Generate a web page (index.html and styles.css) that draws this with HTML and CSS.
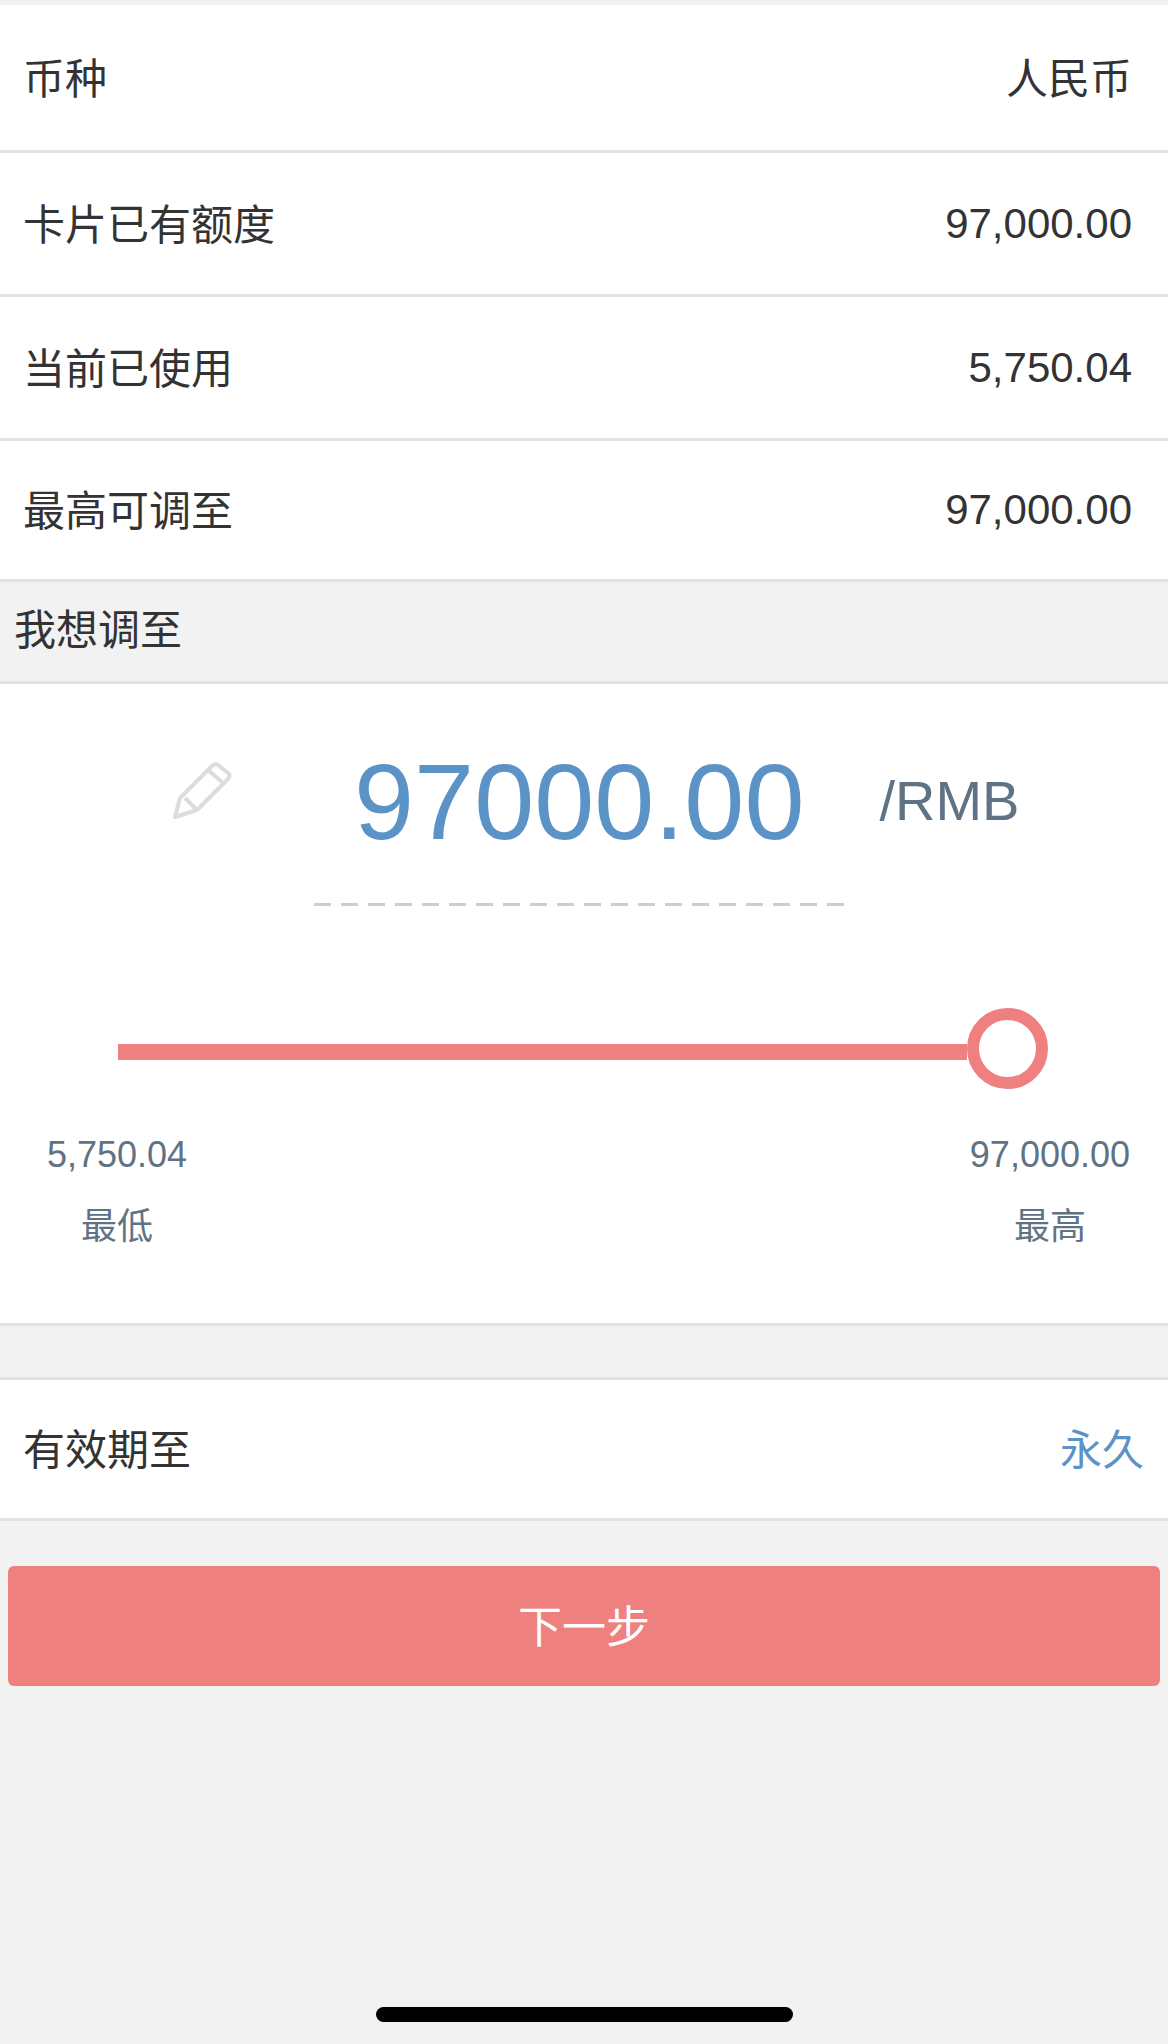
FILE: index.html
```html
<!DOCTYPE html>
<html>
  <head>
    <meta charset="utf-8">
    <link rel="stylesheet" href="styles.css">
  </head>
  <body>
    <div class="page">
      <div class="info-list">
        <div class="row row-first"><span class="cjk">币种</span><span class="cjk">人民币</span></div>
        <div class="row"><span class="cjk">卡片已有额度</span><span>97,000.00</span></div>
        <div class="row"><span class="cjk">当前已使用</span><span>5,750.04</span></div>
        <div class="row row-last"><span class="cjk">最高可调至</span><span>97,000.00</span></div>
      </div>

      <div class="section-title">我想调至</div>

      <div class="adjust-card">
        <div class="amount">
          <svg class="pencil" width="64" height="64" viewBox="0 0 64 64" fill="none" stroke="#dcdcdc" stroke-width="4" stroke-linejoin="round">
            <path d="M3 59 L8 40 L40 8 Q43 5 46 7 L56 15 Q59 18 56 21 L25 52 Z"></path>
            <path d="M36 12 L51 25"></path>
            <path d="M13 40 L25 52"></path>
          </svg>
          <span class="amount-value">97000.00</span>
          <span class="amount-unit">/RMB</span>
        </div>
        <div class="dashes"></div>

        <div class="slider">
          <div class="slider-track"></div>
          <div class="slider-knob"></div>
        </div>

        <div class="limits">
          <div class="limit">
            <div class="limit-num">5,750.04</div>
            <div class="limit-name">最低</div>
          </div>
          <div class="limit">
            <div class="limit-num">97,000.00</div>
            <div class="limit-name">最高</div>
          </div>
        </div>
      </div>

      <div class="row row-expiry"><span class="cjk">有效期至</span><span class="cjk link">永久</span></div>

      <button class="next-btn">下一步</button>

      <div class="home-bar"></div>
    </div>
  </body>
</html>
```

FILE: styles.css
```css
* {
  box-sizing: border-box;
}

body {
  margin: 0;
  background-color: #f2f2f2;
  color: #333;
  font-family: "Liberation Sans", "Noto Sans CJK SC", sans-serif;
  font-size: 42px;
}

.page {
  min-height: 2044px;
  display: flex;
  flex-direction: column;
  padding-top: 5px;
}

.row {
  display: flex;
  justify-content: space-between;
  align-items: center;
  height: 144px;
  padding: 0 36px 0 23px;
  background-color: #fff;
  border-bottom: 3px solid #e2e2e2;
}

.row-first {
  height: 148px;
}

.row-last {
  height: 141px;
}

/* the CJK fallback sits lower than the latin digits */
.cjk {
  padding-bottom: 5px;
}

.section-title {
  height: 102px;
  padding-left: 14px;
  line-height: 98px;
  border-bottom: 3px solid #e2e2e2;
}

.adjust-card {
  height: 642px;
  background-color: #fff;
  border-bottom: 3px solid #e2e2e2;
}

.amount {
  display: flex;
  align-items: center;
  height: 130px;
  margin-top: 52px;
  padding-left: 172px;
}

.pencil {
  margin-bottom: 22px;
}

.amount-value {
  margin-left: 118px;
  color: #5b93c7;
  font-size: 108px;
}

.amount-unit {
  margin-left: 75px;
  margin-bottom: 2px;
  color: #5f7384;
  font-size: 56px;
}

.dashes {
  width: 532px;
  height: 3px;
  margin: 37px 0 0 314px;
  background: repeating-linear-gradient(to right, #c8cfd1 0, #c8cfd1 17px, transparent 17px, transparent 27px);
}

.slider {
  display: flex;
  align-items: center;
  width: 930px;
  height: 81px;
  margin: 102px 0 0 118px;
}

.slider-track {
  flex: 1;
  height: 16px;
  margin-top: 6px;
  background-color: #ef8080;
}

.slider-knob {
  width: 81px;
  height: 81px;
  border: 12px solid #ef8080;
  border-radius: 50%;
  background-color: #fff;
}

.limits {
  display: flex;
  justify-content: space-between;
  margin-top: 42px;
  padding: 0 38px 0 47px;
  color: #5f7384;
  font-size: 36px;
  text-align: center;
}

.limit-num {
  height: 48px;
  line-height: 48px;
}

.limit-name {
  height: 48px;
  margin-top: 24px;
  line-height: 48px;
}

.row-expiry {
  height: 144px;
  margin-top: 51px;
  padding-right: 24px;
  border-top: 3px solid #e2e2e2;
}

.link {
  color: #5b93c7;
}

.next-btn {
  height: 120px;
  margin: 45px 8px 0;
  padding-bottom: 5px;
  border: 0;
  border-radius: 6px;
  background-color: #ef8080;
  color: #fff;
  font-family: inherit;
  font-size: 44px;
}

.home-bar {
  width: 417px;
  height: 15px;
  margin: auto auto 22px;
  border-radius: 8px;
  background-color: #000;
}
```
